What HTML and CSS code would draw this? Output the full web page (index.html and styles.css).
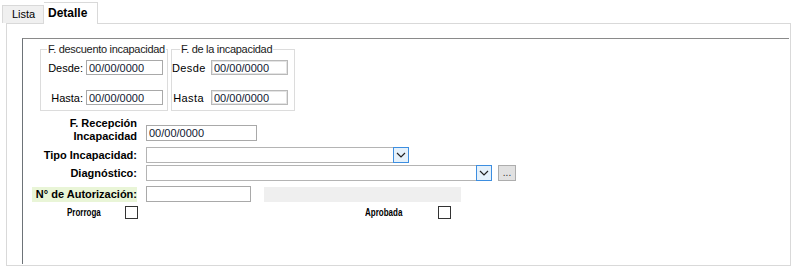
FILE: index.html
```html
<!DOCTYPE html>
<html lang="es">
<head>
  <meta charset="UTF-8">
  <title>Detalle incapacidad</title>
  <link rel="stylesheet" href="styles.css">
</head>
<body>
  <!-- pestañas -->
  <div class="tabs">
    <div class="tab">Lista</div>
    <div class="tab active">Detalle</div>
  </div>

  <div class="page">
    <div class="panel">
      <!-- grupos de fechas -->
      <div class="groups">
        <fieldset class="group g1">
          <legend>F. descuento incapacidad</legend>
          <div class="pairs">
            <label>Desde:</label><input class="txt" value="00/00/0000">
            <label>Hasta:</label><input class="txt" value="00/00/0000">
          </div>
        </fieldset>
        <fieldset class="group g2">
          <legend>F. de la incapacidad</legend>
          <div class="pairs">
            <label>Desde</label><input class="txt boxed" value="00/00/0000">
            <label>Hasta</label><input class="txt boxed" value="00/00/0000">
          </div>
        </fieldset>
      </div>

      <!-- campos -->
      <div class="row row-tall">
        <div class="lbl two">F. Recepción<br>Incapacidad</div>
        <input class="txt rec" value="00/00/0000">
      </div>
      <div class="row gap4">
        <div class="lbl">Tipo Incapacidad:</div>
        <div class="combo tipo"><span class="drop"><svg width="10" height="6" viewBox="0 0 10 6"><polyline points="1,1 5,5 9,1" fill="none" stroke="#222" stroke-width="1.2"/></svg></span></div>
      </div>
      <div class="row gap2">
        <div class="lbl">Diagnóstico:</div>
        <div class="combo diag"><span class="drop"><svg width="10" height="6" viewBox="0 0 10 6"><polyline points="1,1 5,5 9,1" fill="none" stroke="#222" stroke-width="1.2"/></svg></span></div>
        <div class="more">...</div>
      </div>
      <div class="row gap5">
        <div class="lbl"><span class="hl">N° de Autorización:</span></div>
        <input class="txt aut" value="">
        <div class="bar"></div>
      </div>

      <div class="checks">
        <div class="check first"><span class="ctext">Prorroga</span><span class="box"></span></div>
        <div class="check second"><span class="ctext">Aprobada</span><span class="box"></span></div>
      </div>
    </div>
  </div>
</body>
</html>
```

FILE: styles.css
```css
/* base */
body {
  margin: 0;
  background: #fff;
  font-family: "Liberation Sans", Arial, sans-serif;
  font-size: 11px;
  color: #000;
}

/* pestañas */
.tabs {
  display: flex;
  align-items: flex-end;
  height: 23px;
  padding-left: 2px;
}

.tab {
  box-sizing: border-box;
  height: 18px;
  width: 42px;
  padding-left: 9px;
  line-height: 17px;
  background: #f0f0f0;
  border: 1px solid #d9d9d9;
  border-bottom: none;
}

.tab.active {
  position: relative;
  z-index: 1;
  width: 54px;
  height: 22px;
  margin-bottom: -1px;
  padding-left: 4px;
  line-height: 20px;
  font-weight: bold;
  font-size: 12px;
  background: #fff;
  border-left: none;
}

.page {
  box-sizing: border-box;
  margin-left: 6px;
  width: 785px;
  height: 243px;
  border: 1px solid #d9d9d9;
  padding: 14px 1px 1px 15px;
}

.panel {
  box-sizing: border-box;
  height: 100%;
  border-top: 1px solid #8a8a8a;
  border-left: 1px solid #6d7378;
}

/* grupos */
.groups {
  display: flex;
  gap: 3px;
  margin: 4px 0 0 17px;
}

.group {
  box-sizing: border-box;
  width: 128px;
  margin: 0;
  min-width: 0;
  border: 1px solid #dcdcdc;
  padding: 0 4px 5px 0;
}

.group legend {
  margin-left: 6px;
  padding: 0 1px;
  line-height: 13px;
  letter-spacing: -0.3px;
  white-space: nowrap;
  color: #1a1a1a;
}

.pairs {
  display: grid;
  grid-template-columns: 42px 77px;
  column-gap: 3px;
  row-gap: 15px;
  align-items: center;
  padding-top: 4px;
}

.pairs label {
  text-align: right;
}

.g2 {
  width: 124px;
  padding-right: 6px;
}

.g2 legend {
  margin-left: 8px;
}

.g2 .pairs {
  grid-template-columns: 32px 77px;
  column-gap: 7px;
}

.g2 .pairs label {
  letter-spacing: 0.4px;
}

.txt {
  box-sizing: border-box;
  width: 77px;
  height: 15px;
  margin: 0;
  padding: 0 2px;
  border: 1px solid #a9a9a9;
  font-family: "Liberation Sans", Arial, sans-serif;
  font-size: 11px;
  color: #101830;
  background: #fff;
  outline: none;
}

.txt.boxed {
  border-color: #b9b9b9;
  box-shadow: inset 0 0 0 1px #e4e4e4;
}

/* filas */
.row {
  display: flex;
  align-items: center;
  gap: 9px;
  margin-left: 1px;
}

.row-tall {
  align-items: flex-start;
  margin-top: 6px;
}

.gap4 { margin-top: 4px; }
.gap2 { margin-top: 2px; }
.gap5 { margin-top: 5px; }

.lbl {
  width: 113px;
  flex: none;
  text-align: right;
  font-weight: bold;
  line-height: 16px;
}

.lbl.two {
  line-height: 13px;
}

.hl {
  display: inline-block;
  background: #e9f5d7;
  padding: 0 0 0 4px;
  line-height: 15px;
}

.rec {
  width: 111px;
  height: 16px;
  margin-top: 8px;
}

.combo {
  box-sizing: border-box;
  display: flex;
  justify-content: flex-end;
  height: 16px;
  border: 1px solid #b4b4b4;
  background: #fff;
}

.tipo { width: 263px; }
.diag { width: 346px; }

.drop {
  box-sizing: border-box;
  display: flex;
  align-items: center;
  justify-content: center;
  width: 16px;
  height: 16px;
  margin: -1px -1px 0 0;
  border: 1px solid #3d8ee0;
  background: #e5f1fb;
}

.more {
  box-sizing: border-box;
  width: 18px;
  height: 16px;
  margin-left: -3px;
  border: 1px solid #adadad;
  background: #e1e1e1;
  text-align: center;
  font-size: 10px;
  line-height: 13px;
  color: #333;
}

.aut {
  width: 105px;
  height: 16px;
}

.bar {
  width: 197px;
  height: 15px;
  margin-left: 4px;
  background: #efefef;
}

/* casillas */
.checks {
  display: flex;
  align-items: center;
  margin-top: 4px;
  font-size: 10px;
  font-weight: bold;
}

.check {
  display: flex;
  align-items: center;
}

.ctext {
  display: inline-block;
  transform: scaleX(0.8);
  transform-origin: left center;
}

.check.first { margin-left: 44px; }
.check.first .ctext { width: 58px; }

.check.second { margin-left: 227px; }
.check.second .ctext { width: 73px; }

.box {
  box-sizing: border-box;
  width: 13px;
  height: 13px;
  border: 1px solid #333;
  background: #fff;
}
```
